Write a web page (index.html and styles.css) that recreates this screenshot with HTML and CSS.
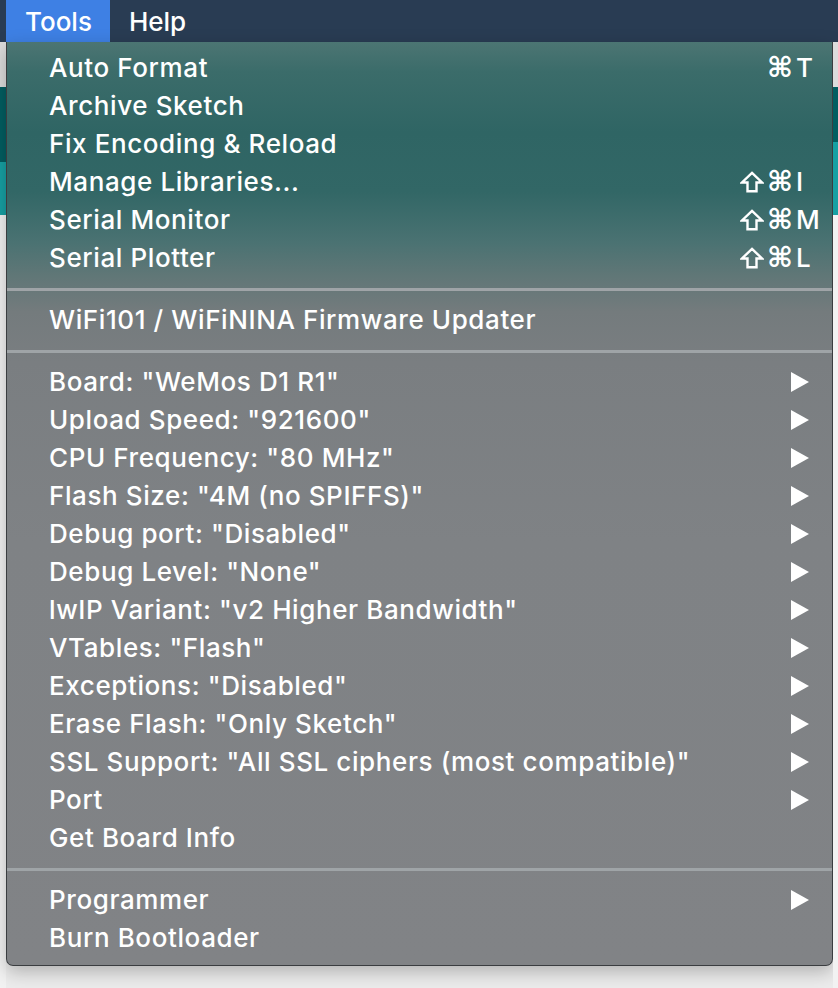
FILE: index.html
```html
<!DOCTYPE html>
<html>
<head>
<meta charset="utf-8">
<link rel="stylesheet" href="styles.css">
</head>
<body>
<div class="screen">
  <div class="menubar">
    <span class="mb-item active">Tools</span>
    <span class="mb-item">Help</span>
  </div>
  <div class="stage">
    <div class="app app-left">
      <div class="strip s-gray"></div>
      <div class="strip s-dark"></div>
      <div class="strip s-teal"></div>
      <div class="strip s-white"></div>
    </div>
    <div class="menu">
      <div class="row"><span>Auto Format</span><span class="key"><span class="mods"><span class="cmd">⌘</span></span><span class="k">T</span></span></div>
      <div class="row"><span>Archive Sketch</span></div>
      <div class="row"><span>Fix Encoding &amp; Reload</span></div>
      <div class="row"><span>Manage Libraries...</span><span class="key"><span class="mods"><svg class="shift" viewBox="0 0 24 22" width="24" height="22"><path d="M12 1.8 L22 11.5 H16.5 V20.2 H7.5 V11.5 H2 Z" fill="none" stroke="#fff" stroke-width="2.4" stroke-linejoin="miter"/></svg><span class="cmd">⌘</span></span><span class="k">I</span></span></div>
      <div class="row"><span>Serial Monitor</span><span class="key"><span class="mods"><svg class="shift" viewBox="0 0 24 22" width="24" height="22"><path d="M12 1.8 L22 11.5 H16.5 V20.2 H7.5 V11.5 H2 Z" fill="none" stroke="#fff" stroke-width="2.4" stroke-linejoin="miter"/></svg><span class="cmd">⌘</span></span><span class="k">M</span></span></div>
      <div class="row"><span>Serial Plotter</span><span class="key"><span class="mods"><svg class="shift" viewBox="0 0 24 22" width="24" height="22"><path d="M12 1.8 L22 11.5 H16.5 V20.2 H7.5 V11.5 H2 Z" fill="none" stroke="#fff" stroke-width="2.4" stroke-linejoin="miter"/></svg><span class="cmd">⌘</span></span><span class="k">L</span></span></div>
      <div class="sep"></div>
      <div class="row"><span>WiFi101 / WiFiNINA Firmware Updater</span></div>
      <div class="sep"></div>
      <div class="row"><span>Board: "WeMos D1 R1"</span><span class="arrow"></span></div>
      <div class="row"><span>Upload Speed: "921600"</span><span class="arrow"></span></div>
      <div class="row"><span>CPU Frequency: "80 MHz"</span><span class="arrow"></span></div>
      <div class="row"><span>Flash Size: "4M (no SPIFFS)"</span><span class="arrow"></span></div>
      <div class="row"><span>Debug port: "Disabled"</span><span class="arrow"></span></div>
      <div class="row"><span>Debug Level: "None"</span><span class="arrow"></span></div>
      <div class="row"><span>lwIP Variant: "v2 Higher Bandwidth"</span><span class="arrow"></span></div>
      <div class="row"><span>VTables: "Flash"</span><span class="arrow"></span></div>
      <div class="row"><span>Exceptions: "Disabled"</span><span class="arrow"></span></div>
      <div class="row"><span>Erase Flash: "Only Sketch"</span><span class="arrow"></span></div>
      <div class="row"><span>SSL Support: "All SSL ciphers (most compatible)"</span><span class="arrow"></span></div>
      <div class="row"><span>Port</span><span class="arrow"></span></div>
      <div class="row"><span>Get Board Info</span></div>
      <div class="sep"></div>
      <div class="row"><span>Programmer</span><span class="arrow"></span></div>
      <div class="row"><span>Burn Bootloader</span></div>
    </div>
    <div class="app app-right">
      <div class="strip s-gray"></div>
      <div class="strip s-dark"></div>
      <div class="strip s-teal"></div>
      <div class="strip s-white"></div>
    </div>
  </div>
</div>
</body>
</html>
```
FILE: styles.css
```css
* { box-sizing: border-box; }
html, body { margin: 0; padding: 0; }
body {
  width: 838px;
  height: 988px;
  overflow: hidden;
  background: #ececec;
  font-family: Inter, "Liberation Sans", Arial, sans-serif;
  font-weight: 500;
  color: #fff;
}
.menubar {
  height: 42px;
  background: #293c53;
  display: flex;
  align-items: stretch;
  padding-left: 6px;
}
.mb-item {
  display: flex;
  align-items: center;
  padding: 0 18px 0 19px;
  font-size: 26px;
  color: #fff;
}
.mb-item.active { background: #3e80e4; }
.stage {
  display: grid;
  grid-template-columns: 6px 827px 5px;
  align-items: start;
}
.app {
  display: flex;
  flex-direction: column;
  height: 946px;
}
.strip.s-gray { height: 45px; background: #dcdcdc; }
.strip.s-dark { background: #035e61; }
.strip.s-teal { background: #17a0a3; }
.strip.s-white { flex: 1; background: #f2f2f2; }
.app-left .s-dark { height: 75px; }
.app-left .s-teal { height: 53px; }
.app-right .s-dark { height: 55px; }
.app-right .s-teal { height: 73px; }
.menu {
  border: 1px solid #3a3d40;
  border-top: none;
  border-radius: 0 0 7px 7px;
  padding: 7px 21px 8px 42px;
  background: linear-gradient(to bottom,
    #4c7573 0px, #3b6c6a 30px, #2f6564 90px, #326766 150px,
    #4a7272 200px, #617777 235px, #747b7d 270px, #7a7e81 320px,
    #7f8285 500px, #818386 100%);
  box-shadow: 0 6px 18px rgba(0,0,0,0.25);
}
.row {
  height: 38px;
  display: flex;
  align-items: center;
  justify-content: space-between;
  font-size: 26px;
  letter-spacing: 0.6px;
  line-height: 1;
  white-space: nowrap;
}
.key {
  display: flex;
  align-items: center;
  letter-spacing: 0;
}
.mods {
  display: flex;
  align-items: center;
  gap: 3px;
}
.cmd {
  font-family: "DejaVu Sans", sans-serif;
  font-weight: bold;
  font-size: 28px;
  line-height: 1;
}
.shift { display: block; }
.k {
  width: 15px;
  margin-left: 3px;
  overflow: visible;
  text-align: left;
}
.arrow {
  width: 0;
  height: 0;
  border-top: 10px solid transparent;
  border-bottom: 10px solid transparent;
  border-left: 18px solid #fff;
  margin-right: 2px;
}
.sep {
  height: 24px;
  margin: 0 -21px 0 -42px;
  display: flex;
  align-items: center;
}
.sep::before {
  content: "";
  display: block;
  width: 100%;
  height: 3px;
  background: #9fa4a7;
}
```
